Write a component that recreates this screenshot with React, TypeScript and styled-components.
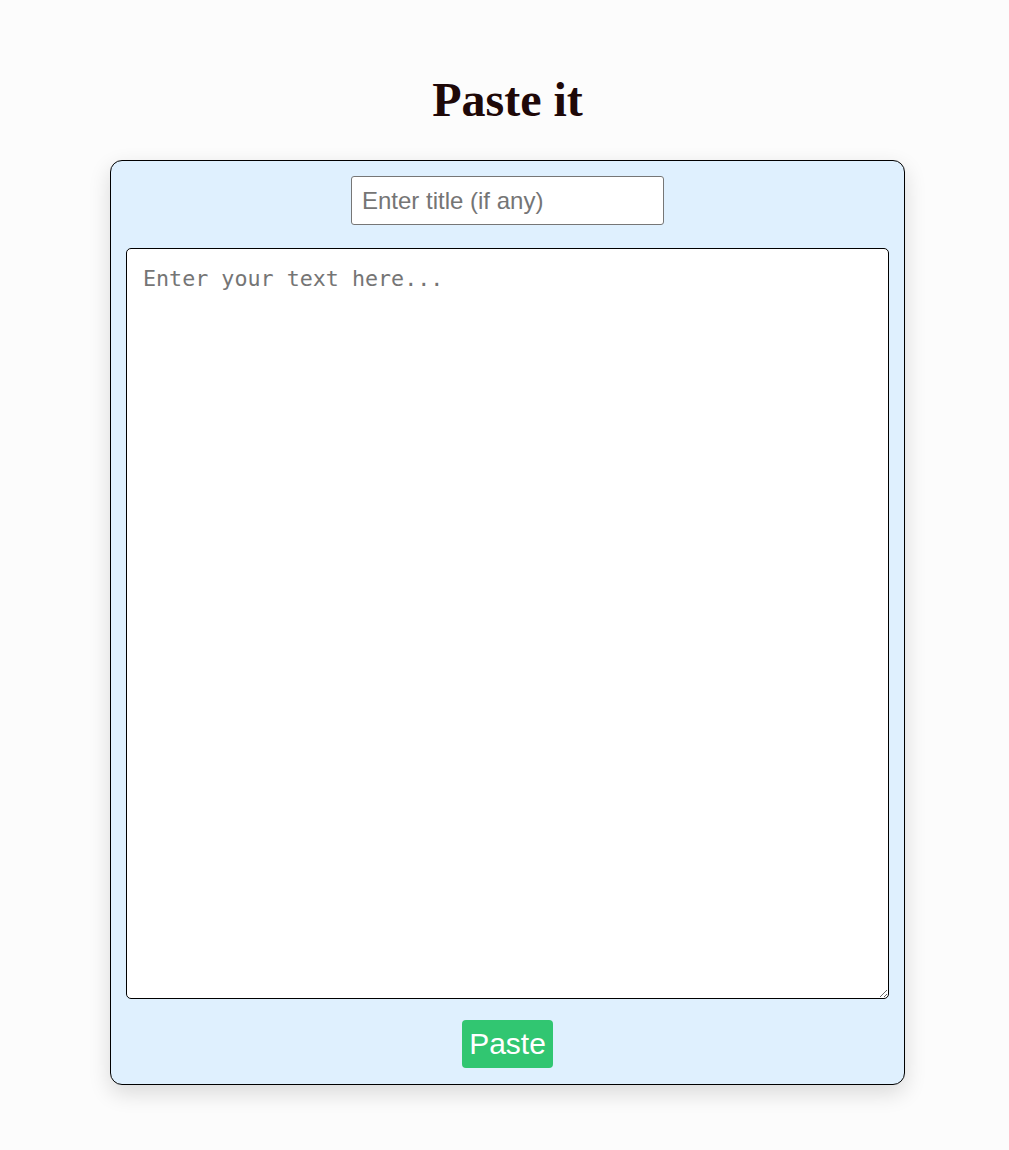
import React from "react";
import styled, { createGlobalStyle } from "styled-components";

const Global = createGlobalStyle`
  html, body { margin: 0; padding: 0; background: #fcfcfc; }
  body { font-family: "Liberation Serif", "Times New Roman", serif; }
`;

const Page = styled.div`
  display: flex;
  flex-direction: column;
  align-items: center;
  padding: 0 0 64px 6px;
`;

const Title = styled.h1`
  margin: 72px 0 32px;
  font-family: "Liberation Serif", "Times New Roman", serif;
  font-size: 48px;
  font-weight: bold;
  line-height: 56px;
  color: #1e0808;
`;

const Card = styled.form`
  box-sizing: border-box;
  width: 795px;
  display: flex;
  flex-direction: column;
  align-items: center;
  padding: 15px 15px 16px 15px;
  background: #dff0fe;
  border: 1px solid #000;
  border-radius: 12px;
  box-shadow: 0 8px 22px rgba(0, 0, 0, 0.14);
`;

const TitleInput = styled.input`
  box-sizing: border-box;
  width: 313px;
  height: 49px;
  padding: 0 10px;
  border: 1px solid #767676;
  border-radius: 3px;
  background: #fff;
  font-family: "Liberation Sans", Arial, sans-serif;
  font-size: 24px;
  color: #111;
  outline: none;
  &::placeholder { color: #757575; }
`;

const TextArea = styled.textarea`
  box-sizing: border-box;
  align-self: stretch;
  width: 763px;
  height: 751px;
  margin-top: 23px;
  padding: 15px 16px;
  border: 1px solid #000;
  border-radius: 5px;
  background: #fff;
  font-family: "DejaVu Sans Mono", "Liberation Mono", monospace;
  font-size: 21.7px;
  line-height: 30px;
  color: #111;
  outline: none;
  &::placeholder { color: #757575; }
`;

const Button = styled.button`
  box-sizing: border-box;
  margin-top: 21px;
  height: 48px;
  padding: 0 7px;
  border: none;
  border-radius: 4px;
  background: #31c671;
  color: #fff;
  font-family: "Liberation Sans", Arial, sans-serif;
  font-size: 30px;
  cursor: pointer;
`;

export default function App() {
  return (
    <>
      <Global />
      <Page>
        <Title>Paste it</Title>
        <Card onSubmit={(e) => e.preventDefault()}>
          <TitleInput placeholder="Enter title (if any)" />
          <TextArea placeholder="Enter your text here..." />
          <Button type="submit">Paste</Button>
        </Card>
      </Page>
    </>
  );
}
